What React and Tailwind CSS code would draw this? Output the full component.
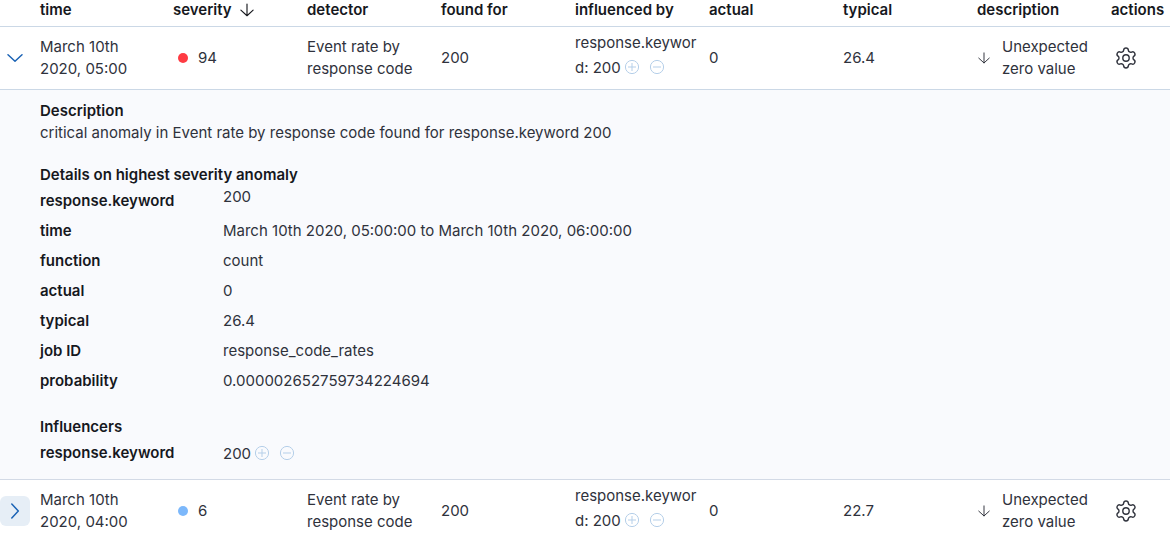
import React from 'react';

const cell = 'px-2 py-1 align-middle text-left';

function Arrow({ className }) {
  return (
    <svg className={className} viewBox="0 0 16 16" fill="none" stroke="currentColor" strokeWidth="1.3" strokeLinecap="round" strokeLinejoin="round" aria-hidden="true">
      <path d="M8 1.2v13.4M1 8.2l7 6.4 7-6.4" />
    </svg>
  );
}

function Chevron({ open }) {
  return (
    <svg className="h-4 w-4" viewBox="0 0 16 16" fill="none" stroke="currentColor" strokeWidth="1.5" strokeLinecap="round" strokeLinejoin="round" aria-hidden="true">
      <path d={open ? 'M1 4.8l7 6.5 7-6.5' : 'M4.8 1l6.5 7-6.5 7'} />
    </svg>
  );
}

function Gear() {
  return (
    <svg className="h-6 w-6" viewBox="0 0 24 24" fill="none" stroke="currentColor" strokeWidth="1.4" strokeLinejoin="round" aria-hidden="true">
      <path d="M9.671 4.136a2.34 2.34 0 0 1 4.659 0 2.34 2.34 0 0 0 3.319 1.915 2.34 2.34 0 0 1 2.33 4.033 2.34 2.34 0 0 0 0 3.831 2.34 2.34 0 0 1-2.33 4.033 2.34 2.34 0 0 0-3.319 1.915 2.34 2.34 0 0 1-4.659 0 2.34 2.34 0 0 0-3.32-1.915 2.34 2.34 0 0 1-2.33-4.033 2.34 2.34 0 0 0 0-3.831A2.34 2.34 0 0 1 6.35 6.051a2.34 2.34 0 0 0 3.319-1.915" />
      <circle cx="12" cy="12" r="3.2" />
    </svg>
  );
}

function FilterButton({ add }) {
  return (
    <button type="button" aria-label={add ? 'Add filter' : 'Remove filter'} className="inline-flex h-6 w-[25px] items-center justify-start text-[#b5cfe9]">
      <svg className="h-4 w-4" viewBox="0 0 16 16" fill="none" stroke="currentColor" strokeWidth="1" aria-hidden="true">
        <circle cx="8" cy="8" r="6.6" />
        <path d={add ? 'M4 8h8M8 4v8' : 'M4 8h8'} />
      </svg>
    </button>
  );
}

function Filterable({ children }) {
  return (
    <div className="break-all leading-[25px]">
      {children}
      <span className="ml-[3px] inline-flex align-top">
        <FilterButton add />
        <FilterButton />
      </span>
    </div>
  );
}

function AnomalyRow({ open, time, severity, dot, typical }) {
  return (
    <tr className="h-[63px] border-b border-[#cbd8e6]">
      <td className="p-0 align-middle">
        <button
          type="button"
          aria-expanded={open}
          aria-label={open ? 'Hide details' : 'Show details'}
          className={`flex h-[30px] w-[30px] items-center justify-center rounded-md text-[#1b63b5] ${open ? '' : 'bg-[#e6eef6]'}`}
        >
          <Chevron open={open} />
        </button>
      </td>
      <td className={cell}>{time}</td>
      <td className={cell}>
        <span className="flex items-center gap-[10px] pl-[5px]">
          <span className={`h-[10px] w-[10px] rounded-full ${dot}`} />
          {severity}
        </span>
      </td>
      <td className={cell}>Event rate by response code</td>
      <td className={cell}>200</td>
      <td className="pt-0.5 pb-2 pl-2 text-left align-middle">
        <Filterable>response.keyword: 200</Filterable>
      </td>
      <td className={cell}>0</td>
      <td className={cell}>{typical}</td>
      <td className={cell}>
        <div className="flex items-center gap-3">
          <Arrow className="ml-px h-3 w-3 shrink-0" />
          <span>Unexpected zero value</span>
        </div>
      </td>
      <td className={cell}>
        <button type="button" aria-label="Actions" className="ml-[3px] flex">
          <Gear />
        </button>
      </td>
    </tr>
  );
}

const details = [
  ['time', 'March 10th 2020, 05:00:00 to March 10th 2020, 06:00:00'],
  ['function', 'count'],
  ['actual', '0'],
  ['typical', '26.4'],
  ['job ID', 'response_code_rates'],
  ['probability', '0.000002652759734224694'],
];

function DetailItem({ label, children, top }) {
  return (
    <div className="flex h-[30px] items-center">
      <dt className="w-[183px] shrink-0 font-semibold text-[#16181d]">{label}</dt>
      <dd className={top ? 'self-start' : ''}>{children}</dd>
    </div>
  );
}

function Details() {
  return (
    <div className="px-10 pt-[10px] pb-[11px]">
      <h4 className="font-semibold text-[#16181d]">Description</h4>
      <p>critical anomaly in Event rate by response code found for response.keyword 200</p>
      <h4 className="mt-5 font-semibold text-[#16181d]">Details on highest severity anomaly</h4>
      <dl>
        <DetailItem label="response.keyword" top>200</DetailItem>
        {details.map(([label, value]) => (
          <DetailItem key={label} label={label}>{value}</DetailItem>
        ))}
      </dl>
      <h4 className="mt-5 font-semibold text-[#16181d]">Influencers</h4>
      <dl>
        <DetailItem label="response.keyword">
          <Filterable>200</Filterable>
        </DetailItem>
      </dl>
    </div>
  );
}

export default function App() {
  return (
    <main className="h-screen overflow-hidden bg-white font-['Inter','Liberation_Sans',sans-serif] text-[15px] leading-[22px] text-[#2f323c]">
      <table className="w-full table-fixed border-collapse">
        <colgroup>
          <col className="w-8" />
          <col className="w-[133px]" />
          <col span={7} />
          <col className="w-[67px]" />
        </colgroup>
        <thead>
          <tr className="border-b border-[#cbd8e6] text-[#16181d] [&>th]:px-2 [&>th]:pb-1.5 [&>th]:text-left [&>th]:leading-5 [&>th]:font-semibold">
            <th aria-label="Expand" />
            <th>time</th>
            <th aria-sort="descending">
              <button type="button" className="flex items-center gap-2">
                severity <Arrow className="h-[14px] w-[14px]" />
              </button>
            </th>
            <th>detector</th>
            <th className="whitespace-nowrap">found for</th>
            <th className="whitespace-nowrap">influenced by</th>
            <th>actual</th>
            <th>typical</th>
            <th>description</th>
            <th>actions</th>
          </tr>
        </thead>
        <tbody>
          <AnomalyRow open time="March 10th 2020, 05:00" severity="94" dot="bg-[#fe3b43]" typical="26.4" />
          <tr className="border-b border-[#d3dae6] bg-[#f9fafd]">
            <td colSpan={10} className="p-0">
              <Details />
            </td>
          </tr>
          <AnomalyRow open={false} time="March 10th 2020, 04:00" severity="6" dot="bg-[#7cb8fb]" typical="22.7" />
        </tbody>
      </table>
    </main>
  );
}
